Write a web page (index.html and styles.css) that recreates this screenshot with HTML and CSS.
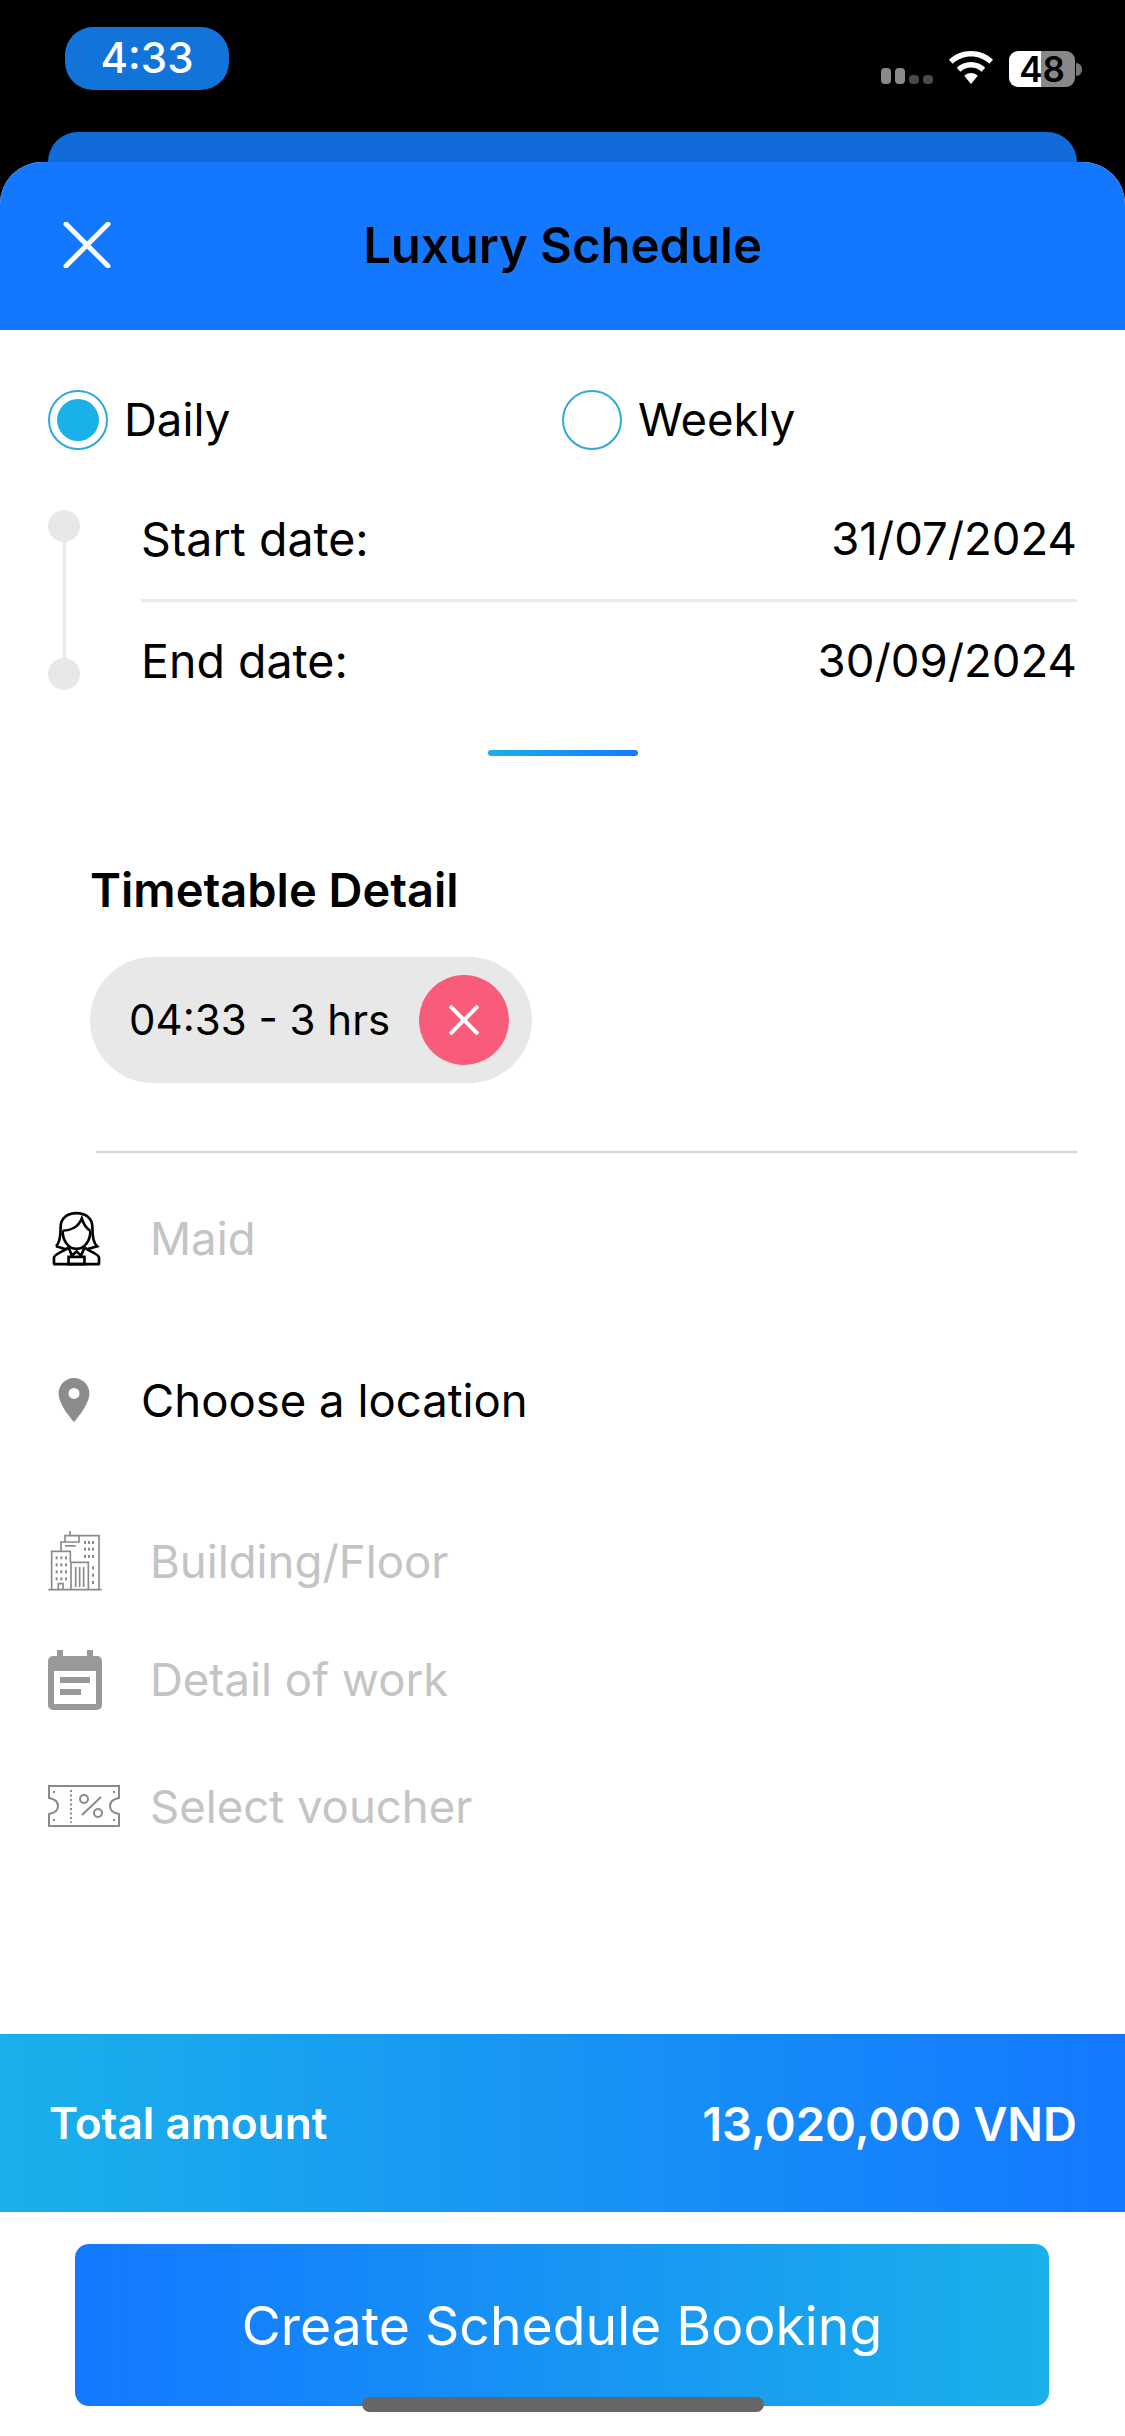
FILE: index.html
```html
<!DOCTYPE html>
<html lang="en">
<head>
<meta charset="utf-8">
<title>Luxury Schedule</title>
<link rel="stylesheet" href="styles.css">
</head>
<body>
<div class="phone">
  <div class="status">
    <div class="time">4:33</div>
    <div class="sys">
      <div class="signal"><i class="bar on"></i><i class="bar on"></i><i class="bar off"></i><i class="bar off"></i></div>
      <svg class="wifi" viewBox="0 0 46 34"><path d="M23 0C14.500 0 6.700 3.300 1 8.700L4.700 12.800C9.500 8.300 16 5.600 23 5.600S36.500 8.300 41.300 12.800L45 8.700C39.300 3.300 31.500 0 23 0Z" fill="#fff"/><path d="M23 11C17.500 11 12.500 13.100 8.800 16.700L12.500 20.800C15.200 18.100 18.900 16.600 23 16.600S30.800 18.100 33.500 20.800L37.200 16.700C33.500 13.100 28.500 11 23 11Z" fill="#fff"/><path d="M23 22C20.300 22 17.900 23.100 16.200 24.800L23 33L29.800 24.800C28.100 23.100 25.700 22 23 22Z" fill="#fff"/></svg>
      <div class="battery"><span class="batt-num">48</span></div>
      <i class="nub"></i>
    </div>
  </div>
  <div class="back-card"></div>
  <div class="sheet">
    <header class="head">
      <svg class="close" viewBox="0 0 48 46"><path d="M3 2L45 44M45 2L3 44" stroke="#fff" stroke-width="5" stroke-linecap="round" fill="none"/></svg>
      <h1 class="title">Luxury Schedule</h1>
    </header>
    <div class="options">
      <div class="opt"><span class="radio checked"><i></i></span><span class="opt-label">Daily</span></div>
      <div class="opt"><span class="radio"></span><span class="opt-label">Weekly</span></div>
    </div>
    <div class="dates">
      <div class="rail"><i class="dot"></i><i class="rail-line"></i><i class="dot"></i></div>
      <div class="date-rows">
        <div class="date-row first"><span class="date-label">Start date:</span><span>31/07/2024</span></div>
        <div class="date-row"><span class="date-label">End date:</span><span>30/09/2024</span></div>
      </div>
    </div>
    <div class="indicator"></div>
    <h2 class="section-title">Timetable Detail</h2>
    <div class="chip">
      <span class="chip-text">04:33 - 3 hrs</span>
      <span class="chip-x"><svg viewBox="0 0 30 30"><path d="M1 1L29 29M29 1L1 29" stroke="#fff" stroke-width="4" fill="none"/></svg></span>
    </div>
    <div class="divider"></div>
    <div class="row row-maid">
      <span class="slot slot-maid"><svg class="ic-maid" viewBox="-4 -4 148 168"><g fill="none" stroke="#000" stroke-width="8"><path d="M8 102C22 90 22 62 22 45C22 15 45 2 70 2S118 15 118 45C118 62 118 90 132 102L104 110"/><path d="M8 102L36 110"/><path d="M28 55C50 55 75 45 86 18C92 38 102 50 112 55"/><path d="M28 55C28 85 45 110 70 110S112 85 112 55"/><path d="M2 156V136C2 126 25 120 46 106M138 156V136C138 126 115 120 94 106"/><path d="M46 106L56 130L70 118L84 130L94 106"/><path d="M46 134H94V156H46Z"/><path d="M0 156H140"/></g></svg></span>
      <span class="hint">Maid</span>
    </div>
    <div class="row row-loc">
      <span class="slot slot-loc"><svg class="ic-pin" viewBox="5 2 14 20"><path fill-rule="evenodd" fill="#8c8c8c" d="M12 2C8.130 2 5 5.130 5 9C5 14.250 12 22 12 22S19 14.250 19 9C19 5.130 15.870 2 12 2ZM12 11.500A2.500 2.500 0 1 1 12 6.500A2.500 2.500 0 0 1 12 11.500Z"/></svg></span>
      <span class="value">Choose a location</span>
    </div>
    <div class="row row-build">
      <span class="slot"><svg class="ic-build" viewBox="0 0 160 180"><g fill="none" stroke="#8a8a8a" stroke-width="5"><path d="M0 176H160"/><path d="M10 176V61H66V94"/><path d="M38 61V33H92V14H152V176"/><path d="M68 176V94H120V176"/><path d="M50 33V14H92"/><path d="M65 14V0"/><path d="M82 108V168M94 108V168M106 108V168"/><path d="M30 176V158H44V176"/></g><g fill="#8a8a8a"><rect x="22" y="76" width="6" height="9"/><rect x="36" y="76" width="6" height="9"/><rect x="50" y="76" width="6" height="9"/><rect x="22" y="97" width="6" height="9"/><rect x="36" y="97" width="6" height="9"/><rect x="50" y="97" width="6" height="9"/><rect x="22" y="118" width="6" height="9"/><rect x="36" y="118" width="6" height="9"/><rect x="50" y="118" width="6" height="9"/><rect x="22" y="139" width="6" height="9"/><rect x="36" y="139" width="6" height="9"/><rect x="50" y="139" width="6" height="9"/><rect x="107" y="30" width="6" height="9"/><rect x="119" y="30" width="6" height="9"/><rect x="131" y="30" width="6" height="9"/><rect x="107" y="50" width="6" height="9"/><rect x="119" y="50" width="6" height="9"/><rect x="131" y="50" width="6" height="9"/><rect x="107" y="72" width="6" height="9"/><rect x="119" y="72" width="6" height="9"/><rect x="131" y="72" width="6" height="9"/><rect x="131" y="106" width="6" height="9"/><rect x="131" y="128" width="6" height="9"/><rect x="131" y="150" width="6" height="9"/><rect x="50" y="42" width="32" height="5"/></g></svg></span>
      <span class="hint">Building/Floor</span>
    </div>
    <div class="row row-work">
      <span class="slot"><svg class="ic-cal" viewBox="0 0 54 60"><path fill="#999" d="M9 0H15V6H39V0H45V6H49A5 5 0 0 1 54 11V55A5 5 0 0 1 49 60H5A5 5 0 0 1 0 55V11A5 5 0 0 1 5 6H9Z"/><rect x="6" y="21" width="42" height="33" fill="#fff"/><rect x="12" y="27" width="30" height="6" fill="#999"/><rect x="12" y="39" width="21" height="6" fill="#999"/></svg></span>
      <span class="hint">Detail of work</span>
    </div>
    <div class="row row-voucher">
      <span class="slot"><svg class="ic-voucher" viewBox="0 0 72 42"><g fill="none" stroke="#8a8a8a"><path stroke-width="2" d="M1 1H71V13C65 14 62 17 62 21C62 25 65 28 71 29V41H1V29C7 28 10 25 10 21C10 17 7 14 1 13Z"/><path stroke-width="2" stroke-dasharray="2 2.500" d="M23 5V38"/><circle stroke-width="2" cx="36" cy="14" r="4"/><circle stroke-width="2" cx="50" cy="28" r="4"/><path stroke-width="2" d="M53 12L34 30"/></g><g fill="#8a8a8a"><rect x="5" y="6" width="2" height="2"/><rect x="65" y="6" width="2" height="2"/><rect x="5" y="34" width="2" height="2"/><rect x="65" y="34" width="2" height="2"/></g></svg></span>
      <span class="hint">Select voucher</span>
    </div>
    <footer class="foot">
      <div class="total"><span class="total-label">Total amount</span><span class="total-value">13,020,000 VND</span></div>
      <button class="cta">Create Schedule Booking</button>
    </footer>
  </div>
  <div class="home"></div>
</div>
</body>
</html>
```

FILE: styles.css
```css
* { box-sizing: border-box; }
html, body { margin: 0; padding: 0; }
body { font-family: Inter, "Liberation Sans", sans-serif; color: #000; background: #000; }
.phone { position: relative; width: 1125px; height: 2436px; display: flex; flex-direction: column; background: #000; overflow: hidden; }

.status { height: 132px; padding: 27px 43px 0 65px; display: flex; justify-content: space-between; align-items: flex-start; flex: none; }
.time { width: 164px; height: 63px; border-radius: 28px; background: #1273d8; color: #fff; font-size: 42px; font-weight: 500; line-height: 62px; text-align: center; }
.sys { display: flex; align-items: flex-start; margin-top: 24px; }
.signal { display: flex; align-items: flex-end; gap: 4px; height: 34px; margin-right: 15px; padding-bottom: 1px; }
.bar { display: block; width: 10px; border-radius: 4px; }
.bar.on { height: 16px; background: #8a8a8a; }
.bar.off { height: 9px; background: #4a4a4a; }
.wifi { width: 46px; height: 34px; margin-right: 15px; }
.battery { width: 66px; height: 36px; border-radius: 9px; background: linear-gradient(90deg, #fff 0, #fff 32px, #888 32px, #888 100%); display: flex; align-items: center; justify-content: center; }
.batt-num { font-size: 35px; font-weight: 600; color: #000; line-height: 36px; }
.nub { display: block; width: 6px; height: 13px; margin: 12px 0 0 1px; background: #777; border-radius: 0 6px 6px 0; }

.back-card { height: 30px; margin: 0 48px; flex: none; background: #126bdb; border-radius: 32px 32px 0 0; }

.sheet { flex: 1; display: flex; flex-direction: column; background: #fff; border-radius: 42px 42px 0 0; overflow: hidden; }
.head { height: 168px; flex: none; background: #1478ff; position: relative; display: flex; align-items: center; justify-content: center; }
.close { position: absolute; left: 63px; top: 60px; width: 48px; height: 46px; }
.title { margin: 0; font-size: 49px; font-weight: 600; line-height: 58px; }

.options { display: flex; padding: 60px 0 0 48px; flex: none; }
.opt { width: 514px; height: 60px; display: flex; align-items: center; gap: 16px; }
.radio { width: 60px; height: 60px; border: 2px solid #2ea9dd; border-radius: 50%; display: flex; align-items: center; justify-content: center; flex: none; }
.radio i { display: block; width: 42px; height: 42px; border-radius: 50%; background: #1ab0ea; }
.opt-label { font-size: 45.500px; line-height: 58px; }

.dates { display: flex; padding: 60px 48px 0 48px; flex: none; }
.rail { width: 32px; margin-right: 61px; display: flex; flex-direction: column; align-items: center; }
.dot { display: block; width: 32px; height: 32px; border-radius: 50%; background: #e8e8e8; flex: none; }
.rail-line { display: block; width: 3px; flex: 1; background: #e8e8e8; }
.date-rows { flex: 1; }
.date-row { display: flex; justify-content: space-between; font-size: 45.500px; line-height: 58px; padding-top: 30px; }
.date-row.first { padding: 0 0 31px; border-bottom: 3px solid #ebebeb; }
.date-label { font-size: 46.500px; }

.indicator { width: 150px; height: 6px; margin: 60px auto 0; border-radius: 3px; background: linear-gradient(90deg, #1ab0ea, #1478ff); flex: none; }
.section-title { margin: 105px 0 0 90px; font-size: 47px; font-weight: 600; line-height: 58px; }
.chip { width: 442px; height: 126px; margin: 38px 0 0 90px; padding: 0 23px 0 39px; border-radius: 63px; background: #e8e8e8; display: flex; align-items: center; justify-content: space-between; flex: none; }
.chip-text { font-size: 42px; line-height: 50px; white-space: nowrap; }
.chip-x { width: 90px; height: 90px; border-radius: 50%; background: #f95c7b; display: flex; align-items: center; justify-content: center; flex: none; }
.chip-x svg { width: 30px; height: 30px; }
.divider { height: 2px; margin: 68px 48px 0 96px; background: #d4d4d4; flex: none; }

.row { display: flex; align-items: center; height: 90px; padding-left: 48px; font-size: 45.500px; flex: none; }
.row-maid { margin-top: 40px; }
.row-loc { margin-top: 72px; }
.row-build { margin-top: 71px; }
.row-work { margin-top: 28px; }
.row-voucher { margin-top: 37px; }
.slot { width: 102px; display: flex; align-items: center; flex: none; }
.slot-maid { padding-left: 4px; }
.slot-loc { width: 93px; padding-left: 9px; }
.hint { color: #c4c4c4; }
.value { color: #000; }
.ic-maid { width: 49px; height: 56px; margin-top: 2px; }
.ic-pin { width: 34px; height: 44px; }
.ic-build { width: 54px; height: 60px; }
.ic-cal { width: 54px; height: 60px; margin-top: 2px; }
.ic-voucher { width: 72px; height: 42px; }

.foot { margin-top: auto; flex: none; padding-bottom: 30px; }
.total { height: 178px; padding: 0 48px 0 49px; display: flex; align-items: center; justify-content: space-between; color: #fff; background: linear-gradient(90deg, #1ab0ea, #1478ff); }
.total-label { font-size: 44.200px; font-weight: 600; }
.total-value { font-size: 47px; font-weight: 600; }
.cta { display: block; width: 974px; height: 162px; margin: 32px 0 0 75px; padding: 0; border: 0; border-radius: 14px; background: linear-gradient(90deg, #1478ff, #1ab0ea); color: #fff; font-family: inherit; font-size: 53.500px; font-weight: 400; }

.home { position: absolute; left: 362px; top: 2397px; width: 402px; height: 15px; border-radius: 8px; background: #666; }
```
